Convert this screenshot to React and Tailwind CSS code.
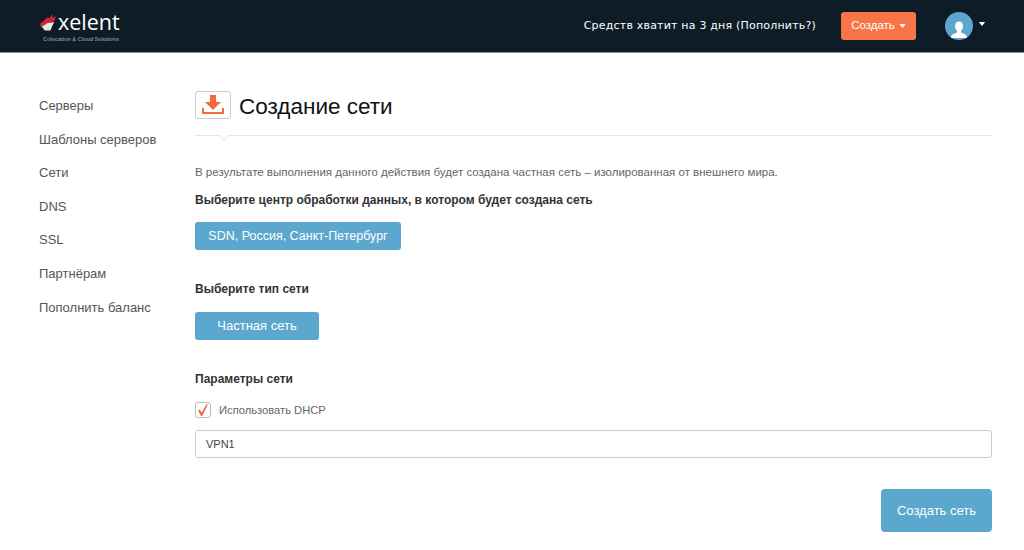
const NAV_ITEMS = ["Серверы", "Шаблоны серверов", "Сети", "DNS", "SSL", "Партнёрам", "Пополнить баланс"];

function Caret({ className }) {
  return (
    <svg viewBox="0 0 8 5" className={className} fill="currentColor">
      <path d="M0 0h8L4 5z" />
    </svg>
  );
}

function Logo() {
  return (
    <div className="flex w-[80px] flex-col">
      <div className="flex h-[24px] items-center">
        <svg viewBox="0 0 20 20" className="h-[20px] w-[19px] shrink-0">
          <path d="M0 12 L8 5 L10 6 L14 1 L13 6 L17 4 L15 9 L8 11 L1 16 Z" fill="#d9232e" />
          <path d="M2 15 L8 11 L15 10 L13 14 L11 19 L5 19 Z" fill="#e8e8e8" />
        </svg>
        <span className="-ml-[1px] font-['Open_Sans',sans-serif] text-[21.500px] leading-none text-white">xelent</span>
      </div>
      <span className="mt-[1px] ml-[3px] text-[5.400px] leading-[8px] font-bold whitespace-nowrap text-[#7f8c99]">
        Colocation &amp; Cloud Solutions
      </span>
    </div>
  );
}

export default function App() {
  return (
    <div className="flex h-[550px] w-[1024px] flex-col overflow-hidden bg-white font-['Liberation_Sans',sans-serif] text-[#333]">
      {/* Header */}
      <header className="flex h-[53px] shrink-0 items-center justify-between border-b border-[#8a9097] bg-[#0e1c28] pr-[38px] pl-[40px]">
        <Logo />
        <div className="flex items-center">
          <span className="font-['DejaVu_Sans',sans-serif] text-[11px] tracking-[0.2px] text-white">
            Средств хватит на 3 дня (Пополнить?)
          </span>
          <button
            type="button"
            className="ml-[25px] flex h-[28px] w-[75px] items-center justify-center gap-1 rounded-[3px] bg-[#f87548] text-[11.500px] text-white"
          >
            Создать
            <Caret className="h-[4px] w-[7px]" />
          </button>
          <div className="ml-[29px] flex h-[28px] w-[28px] items-end justify-center overflow-hidden rounded-full bg-[#5ba7cd]">
            <svg viewBox="0 0 20 20" className="h-[20px] w-[20px]" fill="#fff">
              <path d="M10 1.500c-2.600 0-4 2-4 4.500 0 2 .8 3.800 2 4.800v1.700c-1.800 1-5.500 1.600-6 4.500v1h16v-1c-.5-2.900-4.200-3.500-6-4.500v-1.700c1.200-1 2-2.800 2-4.800 0-2.500-1.400-4.500-4-4.500z" />
            </svg>
          </div>
          <Caret className="mb-[4px] ml-[5px] h-[4px] w-[8px] text-white" />
        </div>
      </header>

      <div className="flex flex-1">
        {/* Sidebar */}
        <nav className="flex w-[195px] shrink-0 flex-col gap-[13.600px] pt-[43px] pl-[39px]">
          {NAV_ITEMS.map((item) => (
            <a key={item} className="text-[13px] leading-[20px] text-[#555]">
              {item}
            </a>
          ))}
        </nav>

        {/* Content */}
        <main className="mr-[32px] flex-1 pt-[38px]">
          <div className="flex items-center gap-[8px]">
            <div className="flex h-[28px] w-[36px] items-center justify-center rounded-[3px] border border-[#ccc]">
              <svg viewBox="0 0 24 20" className="h-[20px] w-[24px]" fill="#f4683c">
                <path d="M9 0h6v7h5l-8 8-8-8h5z" />
                <path d="M1 13h2v4h18v-4h2v6H1z" />
              </svg>
            </div>
            <h1 className="h-[28px] pt-[4px] text-[22.500px] leading-[24px] text-[#111]">Создание сети</h1>
          </div>
          <div className="relative mt-[16px] h-[1px] bg-[#e5e5e5]">
            <span className="absolute top-[-4px] left-[25px] h-[8px] w-[8px] rotate-45 border-r border-b border-[#e5e5e5] bg-white" />
          </div>

          <p className="mt-[27px] text-[11.500px] leading-[18px] text-[#666]">
            В результате выполнения данного действия будет создана частная сеть – изолированная от внешнего мира.
          </p>
          <p className="mt-[10px] text-[12px] leading-[18px] font-bold text-[#333]">
            Выберите центр обработки данных, в котором будет создана сеть
          </p>
          <button
            type="button"
            className="mt-[13px] flex h-[28px] w-[206px] items-center justify-center rounded-[3px] bg-[#5ba7cd] text-[12.500px] text-white"
          >
            SDN, Россия, Санкт-Петербург
          </button>

          <p className="mt-[30px] text-[12px] leading-[18px] font-bold text-[#333]">Выберите тип сети</p>
          <button
            type="button"
            className="mt-[14px] flex h-[28px] w-[124px] items-center justify-center rounded-[3px] bg-[#5ba7cd] text-[13px] text-white"
          >
            Частная сеть
          </button>

          <p className="mt-[30px] text-[12px] leading-[18px] font-bold text-[#333]">Параметры сети</p>
          <label className="mt-[13px] flex items-center gap-[8px]">
            <span className="flex h-[16px] w-[16px] items-center justify-center rounded-[3px] border border-[#bbb] bg-white">
              <svg viewBox="0 0 14 14" className="h-[14px] w-[14px]" fill="#f4683c">
                <path d="M2 7.500l1.800-1 1.900 3.200L10.500 1l1.300.6L6.200 13H5z" />
              </svg>
            </span>
            <span className="text-[11.200px] leading-[18px] text-[#666]">Использовать DHCP</span>
          </label>
          <input
            readOnly
            value="VPN1"
            className="mt-[11px] block h-[28px] w-full rounded-[3px] border border-[#ccc] px-[10px] text-[11px] text-[#444] outline-none"
          />
          <div className="mt-[31px] flex justify-end">
            <button
              type="button"
              className="h-[43px] w-[111px] rounded-[4px] bg-[#5ba7cd] text-[13px] text-white"
            >
              Создать сеть
            </button>
          </div>
        </main>
      </div>
    </div>
  );
}
